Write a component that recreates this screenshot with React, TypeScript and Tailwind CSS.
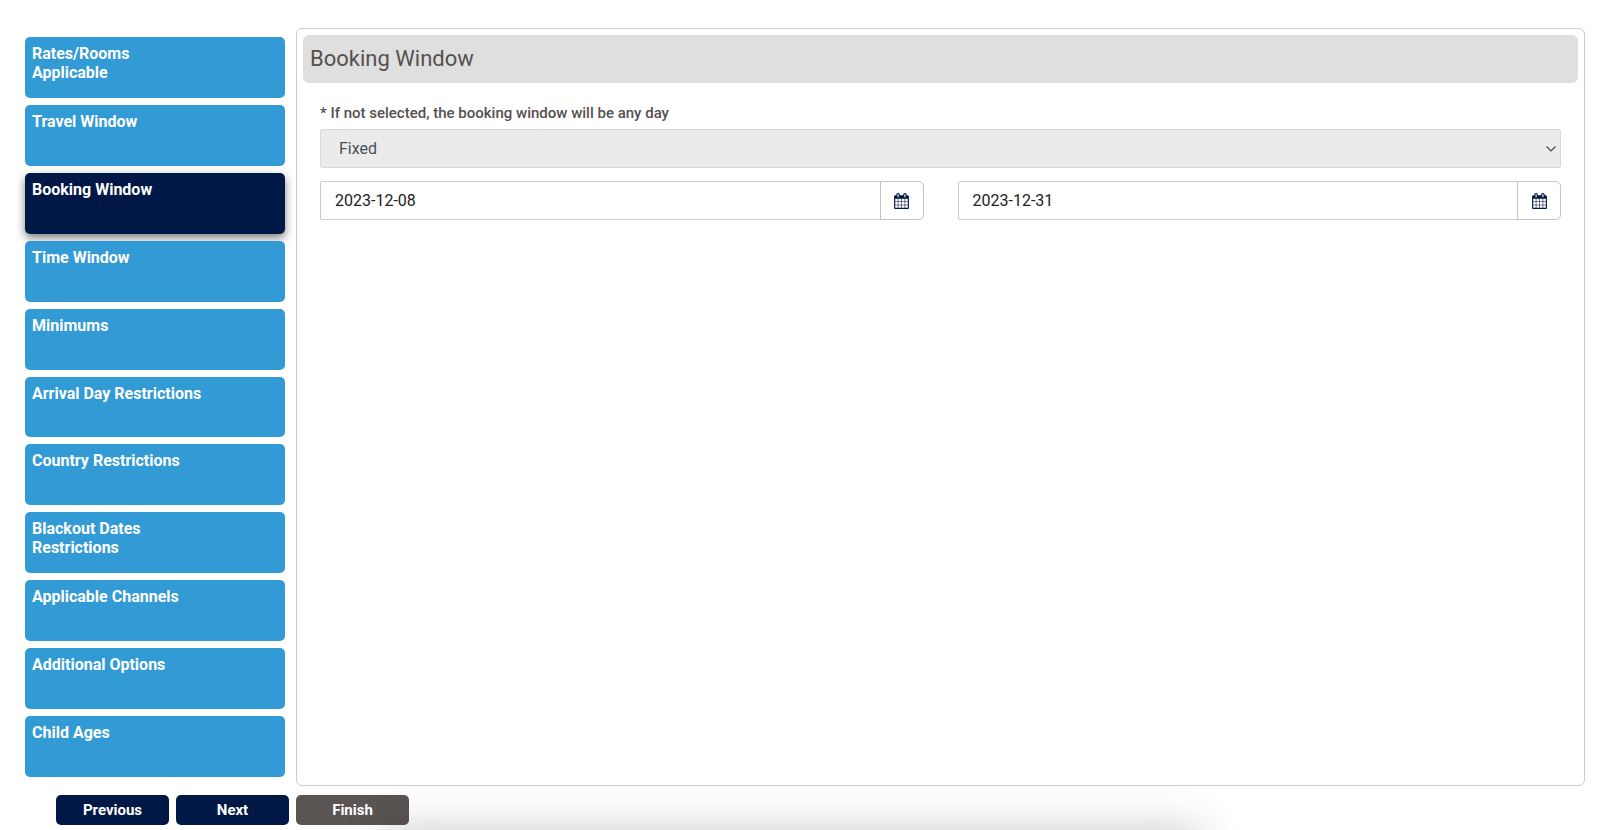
import { useState } from 'react';
import clsx from 'clsx';

const STEPS = [
  'Rates/Rooms Applicable',
  'Travel Window',
  'Booking Window',
  'Time Window',
  'Minimums',
  'Arrival Day Restrictions',
  'Country Restrictions',
  'Blackout Dates Restrictions',
  'Applicable Channels',
  'Additional Options',
  'Child Ages',
];

function CalendarIcon() {
  return (
    <svg className="h-4 w-[15px]" viewBox="0 0 1664 1792" fill="currentColor" aria-hidden="true">
      <path d="M128 1664h288v-288h-288v288zm352 0h320v-288h-320v288zm-352-352h288v-320h-288v320zm352 0h320v-320h-320v320zm-352-384h288v-288h-288v288zm736 736h320v-288h-320v288zm-384-736h320v-288h-320v288zm768 736h288v-288h-288v288zm-384-352h320v-320h-320v320zm-352-864v-288q0-13-9.5-22.5t-22.5-9.5h-64q-13 0-22.5 9.5t-9.5 22.5v288q0 13 9.5 22.5t22.5 9.5h64q13 0 22.5-9.5t9.5-22.5zm736 864h288v-320h-288v320zm-384-384h320v-288h-320v288zm384 0h288v-288h-288v288zm32-480v-288q0-13-9.5-22.5t-22.5-9.5h-64q-13 0-22.5 9.5t-9.5 22.5v288q0 13 9.5 22.5t22.5 9.5h64q13 0 22.5-9.5t9.5-22.5zm384-64v1280q0 52-38 90t-90 38h-1408q-52 0-90-38t-38-90v-1280q0-52 38-90t90-38h128v-96q0-66 47-113t113-47h64q66 0 113 47t47 113v96h384v-96q0-66 47-113t113-47h64q66 0 113 47t47 113v96h128q52 0 90 38t38 90z" />
    </svg>
  );
}

type DateFieldProps = {
  label: string;
  value: string;
  onChange: (value: string) => void;
};

function DateField({ label, value, onChange }: DateFieldProps) {
  return (
    <div className="flex h-[39px] min-w-0 flex-1">
      <input
        type="text"
        aria-label={label}
        value={value}
        onChange={(e) => onChange(e.target.value)}
        className="min-w-0 flex-1 rounded-l-xs border border-[#cccccc] bg-white px-3.5 text-base text-[#222222]"
      />
      <button
        type="button"
        aria-label={`${label} calendar`}
        className="-ml-px flex w-11 items-center justify-center rounded-r-[5px] border border-[#c4c4c4] bg-white text-[#001845]"
      >
        <CalendarIcon />
      </button>
    </div>
  );
}

export default function App() {
  const [active, setActive] = useState(2);
  const [from, setFrom] = useState('2023-12-08');
  const [to, setTo] = useState('2023-12-31');

  return (
    <div className="relative flex min-h-screen flex-col overflow-hidden bg-white pt-7 font-[Roboto,sans-serif]">
      <div className="flex flex-1 gap-[11px] pr-[15px] pl-[25px]">
        <nav className="flex w-[260px] shrink-0 flex-col gap-[7px] py-[9px]">
          {STEPS.map((step, i) => (
            <button
              key={step}
              type="button"
              onClick={() => setActive(i)}
              className={clsx(
                'flex flex-1 items-start rounded-[5px] px-[7px] pt-[7px] text-left text-base leading-[19px] font-bold text-white',
                i === active ? 'bg-[#001845] shadow-[0_4px_10px_rgba(0,0,0,0.5)]' : 'bg-[#329ad4]'
              )}
            >
              <span className="max-w-[170px]">{step}</span>
            </button>
          ))}
        </nav>

        <main className="min-w-0 flex-1 rounded-md border border-[#cccccc] p-1.5">
          <h1 className="rounded-md bg-[#dfdfdf] px-[7px] text-[22px] leading-[48px] text-[#555050]">
            Booking Window
          </h1>

          <div className="px-[17px] pt-[19px]">
            <label htmlFor="window-type" className="block text-[15px] leading-[22px] font-medium text-[#555050]">
              * If not selected, the booking window will be any day
            </label>

            <div className="relative mt-[5px]">
              <select
                id="window-type"
                disabled
                className="block h-[39px] w-full appearance-none rounded-xs border border-[#d8d8d8] bg-[#ebebeb] px-[18px] text-base text-[#495057] opacity-100"
              >
                <option>Fixed</option>
              </select>
              <svg
                className="pointer-events-none absolute top-4 right-1 h-2 w-3"
                viewBox="0 0 12 8"
                fill="none"
                stroke="#444"
                strokeWidth="1.2"
              >
                <path d="M1.5 1.5 6 6l4.500-4.500" />
              </svg>
            </div>

            <div className="mt-[13px] flex gap-[34px]">
              <DateField label="Start date" value={from} onChange={setFrom} />
              <DateField label="End date" value={to} onChange={setTo} />
            </div>
          </div>
        </main>
      </div>

      <footer className="flex gap-[7px] pt-[9px] pb-[5px] pl-14 text-[15px] font-bold text-white">
        <button
          type="button"
          onClick={() => setActive(Math.max(active - 1, 0))}
          className="h-[30px] w-[113px] rounded-[5px] bg-[#001845]"
        >
          Previous
        </button>
        <button
          type="button"
          onClick={() => setActive(Math.min(active + 1, STEPS.length - 1))}
          className="h-[30px] w-[113px] rounded-[5px] bg-[#001845]"
        >
          Next
        </button>
        <button type="button" className="h-[30px] w-[113px] rounded-[5px] bg-[#5a5453]">
          Finish
        </button>
      </footer>

      {/* soft shadow along the bottom edge */}
      <div className="pointer-events-none absolute top-full right-[25%] left-[24%] h-24 shadow-[0_0_44px_rgba(0,0,0,0.22)]" />
    </div>
  );
}
